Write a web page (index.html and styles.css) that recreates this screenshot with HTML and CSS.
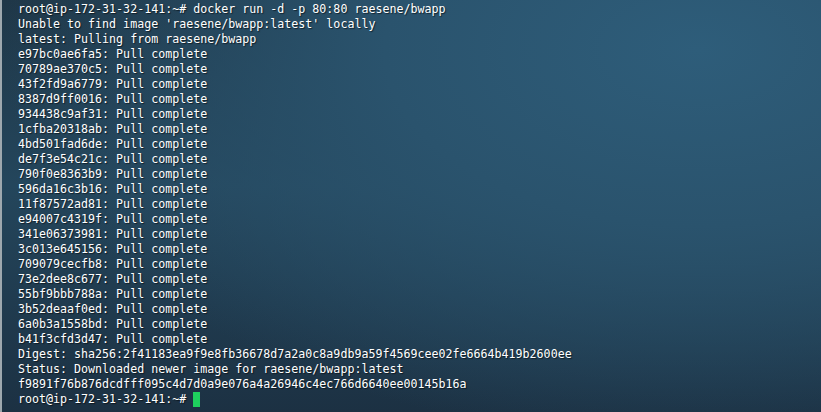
FILE: index.html
```html
<!DOCTYPE html>
<html lang="en">
<head>
    <meta charset="UTF-8">
    <meta name="viewport" content="width=device-width, initial-scale=1.0">
    <title>Terminal</title>
    <link rel="stylesheet" href="styles.css">
</head>
<body>
    <div class="terminal">
        <pre class="output">root@ip-172-31-32-141:~# docker run -d -p 80:80 raesene/bwapp
Unable to find image 'raesene/bwapp:latest' locally
latest: Pulling from raesene/bwapp
e97bc0ae6fa5: Pull complete
70789ae370c5: Pull complete
43f2fd9a6779: Pull complete
8387d9ff0016: Pull complete
934438c9af31: Pull complete
1cfba20318ab: Pull complete
4bd501fad6de: Pull complete
de7f3e54c21c: Pull complete
790f0e8363b9: Pull complete
596da16c3b16: Pull complete
11f87572ad81: Pull complete
e94007c4319f: Pull complete
341e06373981: Pull complete
3c013e645156: Pull complete
709079cecfb8: Pull complete
73e2dee8c677: Pull complete
55bf9bbb788a: Pull complete
3b52deaaf0ed: Pull complete
6a0b3a1558bd: Pull complete
b41f3cfd3d47: Pull complete
Digest: sha256:2f41183ea9f9e8fb36678d7a2a0c8a9db9a59f4569cee02fe6664b419b2600ee
Status: Downloaded newer image for raesene/bwapp:latest
f9891f76b876dcdfff095c4d7d0a9e076a4a26946c4ec766d6640ee00145b16a
root@ip-172-31-32-141:~# <span class="cursor"> </span></pre>
    </div>
</body>
</html>
```

FILE: styles.css
```css
* {
    margin: 0;
    padding: 0;
    box-sizing: border-box;
}

html, body {
    width: 100%;
    height: 100%;
}

body {
    overflow: hidden;
    background: #1e3445;
}

.terminal {
    width: 100%;
    height: 100%;
    border-left: 2px solid #9ea8ae;
    padding: 2px 0 0 16px;
    background:
        radial-gradient(ellipse 85% 95% at 85% 12%, #2e5d7a 0%, #2a536d 45%, rgba(35, 62, 82, 0) 100%),
        linear-gradient(180deg, #1f3748 0%, #24465c 45%, #1c3143 100%);
}

.output {
    font-family: "DejaVu Sans Mono", monospace;
    font-size: 11.65px;
    line-height: 15px;
    color: #ffffff;
    text-shadow: 1px 1px 1px rgba(0, 0, 0, 0.55);
    white-space: pre;
}

.cursor {
    display: inline-block;
    width: 7px;
    height: 15px;
    vertical-align: top;
    background: #1ed05e;
    text-shadow: none;
}
```
